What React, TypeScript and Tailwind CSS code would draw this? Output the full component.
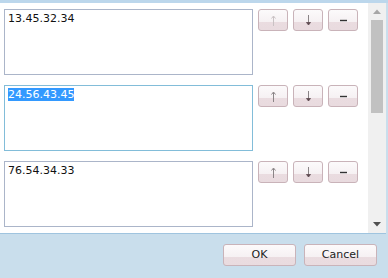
import React from "react";

const font = { fontFamily: '"DejaVu Sans", Verdana, sans-serif' };

function UpIcon({ disabled }: { disabled?: boolean }) {
  const c = disabled ? "#c9c2c4" : "#8a8486";
  return (
    <svg width="7" height="11" viewBox="0 0 7 11">
      <line x1="3.5" y1="1.5" x2="3.5" y2="11" stroke={c} strokeWidth="1" />
      <path d="M1.5 3.5 L3.5 1 L5.5 3.5" fill="none" stroke={c} strokeWidth="1" />
    </svg>
  );
}

function DownIcon() {
  return (
    <svg width="7" height="11" viewBox="0 0 7 11">
      <line x1="3.5" y1="0" x2="3.5" y2="9.5" stroke="#8a8486" strokeWidth="1" />
      <path d="M1.5 7.5 L3.5 10 L5.5 7.5 Z" fill="#5e4a50" stroke="#5e4a50" strokeWidth="0.8" />
    </svg>
  );
}

function MinusIcon() {
  return (
    <svg width="9" height="3" viewBox="0 0 9 3">
      <line x1="1" y1="1.5" x2="8" y2="1.5" stroke="#333" strokeWidth="1.4" />
    </svg>
  );
}

const btn =
  "h-[22px] rounded-[3px] border border-[#c9b3b9] bg-[linear-gradient(to_bottom,#fcfafb_0%,#f6f1f3_58%,#eadce0_58%,#e9dbdf_100%)] flex items-center justify-center";

function Row({ text, focused, upDisabled }: { text: string; focused?: boolean; upDisabled?: boolean }) {
  return (
    <div className="flex items-start">
      <div
        className={`w-[249px] h-[66px] bg-white border pl-[3px] pt-[2px] text-[11px] leading-[14px] text-[#111] ${
          focused ? "border-[#82bdd9]" : "border-[#abb5c9]"
        }`}
        style={font}
      >
        {focused ? <span className="bg-[#3399ff] text-white">{text}</span> : text}
      </div>
      <div className="flex ml-[5px] gap-[5px]">
        <div className={`${btn} w-[30px]`}>
          <UpIcon disabled={upDisabled} />
        </div>
        <div className={`${btn} w-[30px]`}>
          <DownIcon />
        </div>
        <div className={`${btn} w-[30px]`}>
          <MinusIcon />
        </div>
      </div>
    </div>
  );
}

export default function App() {
  return (
    <div className="w-[388px] h-[278px] bg-[#c9deec] flex flex-col overflow-hidden" style={font}>
      <div className="h-[3px] bg-[#bcd7ec]" />
      <div className="h-[231px] bg-white flex border-b border-[#9fc4df] mr-[2px]">
        <div className="flex-1 flex flex-col gap-[10px] pt-[6px] pl-[4px]">
          <Row text="13.45.32.34" upDisabled />
          <Row text="24.56.43.45" focused />
          <Row text="76.54.34.33" />
        </div>
        <div className="w-[18px] bg-[#f0f0f0] flex flex-col items-center">
          <div className="h-[17px] flex items-center justify-center">
            <svg width="8" height="5" viewBox="0 0 8 5">
              <path d="M0 5 L4 0.5 L8 5 Z" fill="#a6a6a6" />
            </svg>
          </div>
          <div className="w-[12px] h-[93px] bg-[#c1c1c1]" />
          <div className="flex-1" />
          <div className="h-[17px] flex items-center justify-center">
            <svg width="8" height="5" viewBox="0 0 8 5">
              <path d="M0 0 L8 0 L4 4.5 Z" fill="#505050" />
            </svg>
          </div>
        </div>
      </div>
      <div className="flex justify-end gap-[8px] pt-[10px] pr-[11px]">
        <div className={`${btn} w-[73px] h-[20px] text-[11px] text-[#222]`}>OK</div>
        <div className={`${btn} w-[73px] h-[20px] text-[11px] text-[#222]`}>Cancel</div>
      </div>
    </div>
  );
}
